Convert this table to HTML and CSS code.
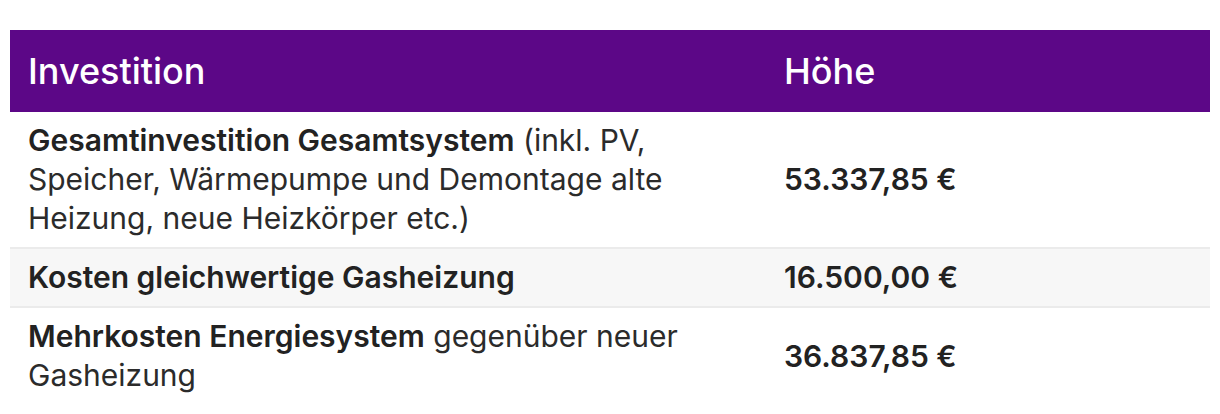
FILE: index.html
```html
<!DOCTYPE html>
<html lang="de">
<head>
<meta charset="utf-8">
<title>Investition</title>
<link rel="stylesheet" href="styles.css">
</head>
<body>
<table class="invest">
  <thead>
    <tr>
      <th class="col-label">Investition</th>
      <th class="col-value">Höhe</th>
    </tr>
  </thead>
  <tbody>
    <tr>
      <td class="col-label"><strong>Gesamtinvestition Gesamtsystem</strong> (inkl. PV, Speicher, Wärmepumpe und Demontage alte Heizung, neue Heizkörper etc.)</td>
      <td class="col-value"><strong>53.337,85 €</strong></td>
    </tr>
    <tr class="alt">
      <td class="col-label"><strong>Kosten gleichwertige Gasheizung</strong></td>
      <td class="col-value"><strong>16.500,00 €</strong></td>
    </tr>
    <tr>
      <td class="col-label"><strong>Mehrkosten Energiesystem</strong> gegenüber neuer Gasheizung</td>
      <td class="col-value"><strong>36.837,85 €</strong></td>
    </tr>
  </tbody>
</table>
</body>
</html>
```

FILE: styles.css
```css
html, body {
  margin: 0;
  padding: 0;
  background: #ffffff;
}

body {
  padding: 30px 10px 0 10px;
  font-family: Inter, "Noto Sans", "Liberation Sans", sans-serif;
  color: #2b2b2b;
}

.invest {
  width: 1200px;
  border-collapse: collapse;
  table-layout: fixed;
}

.invest th {
  background: #5c0787;
  color: #ffffff;
  font-size: 36px;
  font-weight: 500;
  text-align: left;
  height: 82px;
  padding: 0 18px;
  vertical-align: middle;
}

.invest td {
  font-size: 30px;
  line-height: 39px;
  padding: 9px 18px;
  vertical-align: middle;
  border-top: 2px solid #ebebeb;
}

.invest tbody tr:first-child td {
  border-top: none;
}

.invest .col-label {
  width: 720px;
}

.invest strong {
  font-weight: 600;
  color: #222222;
}

.invest tr.alt td {
  background: #f7f7f7;
}
```
